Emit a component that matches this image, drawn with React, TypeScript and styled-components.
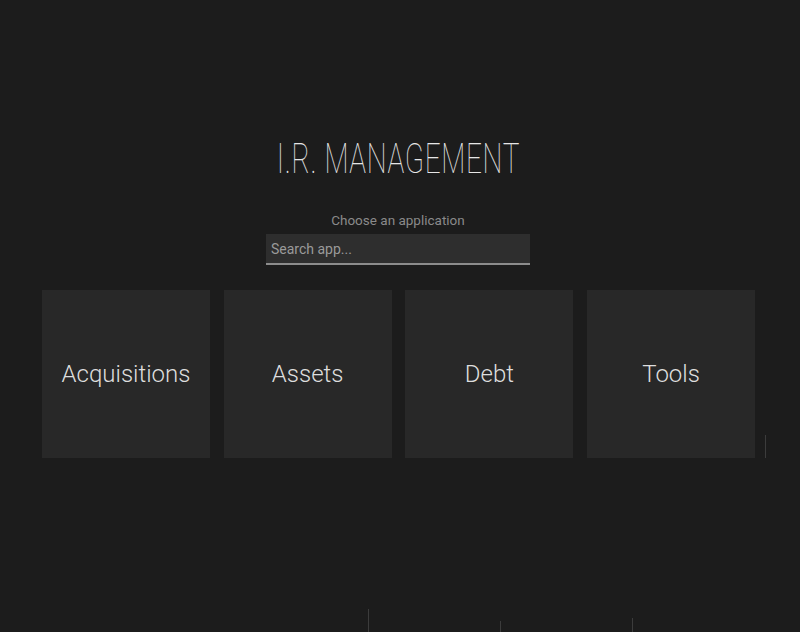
import React from "react";
import styled, { createGlobalStyle } from "styled-components";

const Global = createGlobalStyle`
  html, body { margin: 0; padding: 0; background: #1c1c1c; }
  body { font-family: Roboto, "Noto Sans", sans-serif; }
  * { box-sizing: border-box; }
`;

const Page = styled.div`
  position: relative;
  width: 800px;
  height: 632px;
  overflow: hidden;
  background: #1c1c1c;
  display: flex;
  flex-direction: column;
  align-items: center;
  padding-top: 138px;
  padding-right: 4px;
`;

const Title = styled.h1`
  margin: 0;
  height: 42px;
  font-family: Roboto, sans-serif;
  font-weight: 100;
  font-size: 42px;
  line-height: 42px;
  letter-spacing: 1px;
  color: #e6e6e6;
  transform: scaleX(0.667);
  white-space: nowrap;
`;

const Subtitle = styled.div`
  margin-top: 32px;
  height: 16px;
  font-size: 13.5px;
  line-height: 16px;
  color: #8a8a8a;
`;

const Search = styled.input`
  margin-top: 6px;
  width: 264px;
  height: 31px;
  padding: 0 5px;
  border: none;
  border-bottom: 2px solid #8c8c8c;
  background: #2e2e2e;
  color: #ddd;
  font-family: Roboto, sans-serif;
  font-size: 14px;
  outline: none;
  &::placeholder { color: #9a9a9a; }
`;

const Grid = styled.div`
  margin-top: 25px;
  display: grid;
  grid-template-columns: repeat(4, 168px);
  column-gap: 13.7px;
  margin-left: 1px;
`;

const Card = styled.div`
  height: 168px;
  background: #282828;
  display: flex;
  align-items: center;
  justify-content: center;
  font-size: 24px;
  font-weight: 300;
  color: #dedede;
`;

const Tick = styled.div<{ $x: number; $y: number; $h: number }>`
  position: absolute;
  left: ${(p) => p.$x}px;
  top: ${(p) => p.$y}px;
  width: 1px;
  height: ${(p) => p.$h}px;
  background: #3c3c3c;
`;

const apps = ["Acquisitions", "Assets", "Debt", "Tools"];

export default function App() {
  return (
    <>
      <Global />
      <Page>
        <Title>I.R. MANAGEMENT</Title>
        <Subtitle>Choose an application</Subtitle>
        <Search placeholder="Search app..." />
        <Grid>
          {apps.map((a) => (
            <Card key={a}>{a}</Card>
          ))}
        </Grid>
        <Tick $x={765} $y={435} $h={23} />
        <Tick $x={368} $y={609} $h={23} />
        <Tick $x={500} $y={621} $h={11} />
        <Tick $x={632} $y={618} $h={14} />
      </Page>
    </>
  );
}
